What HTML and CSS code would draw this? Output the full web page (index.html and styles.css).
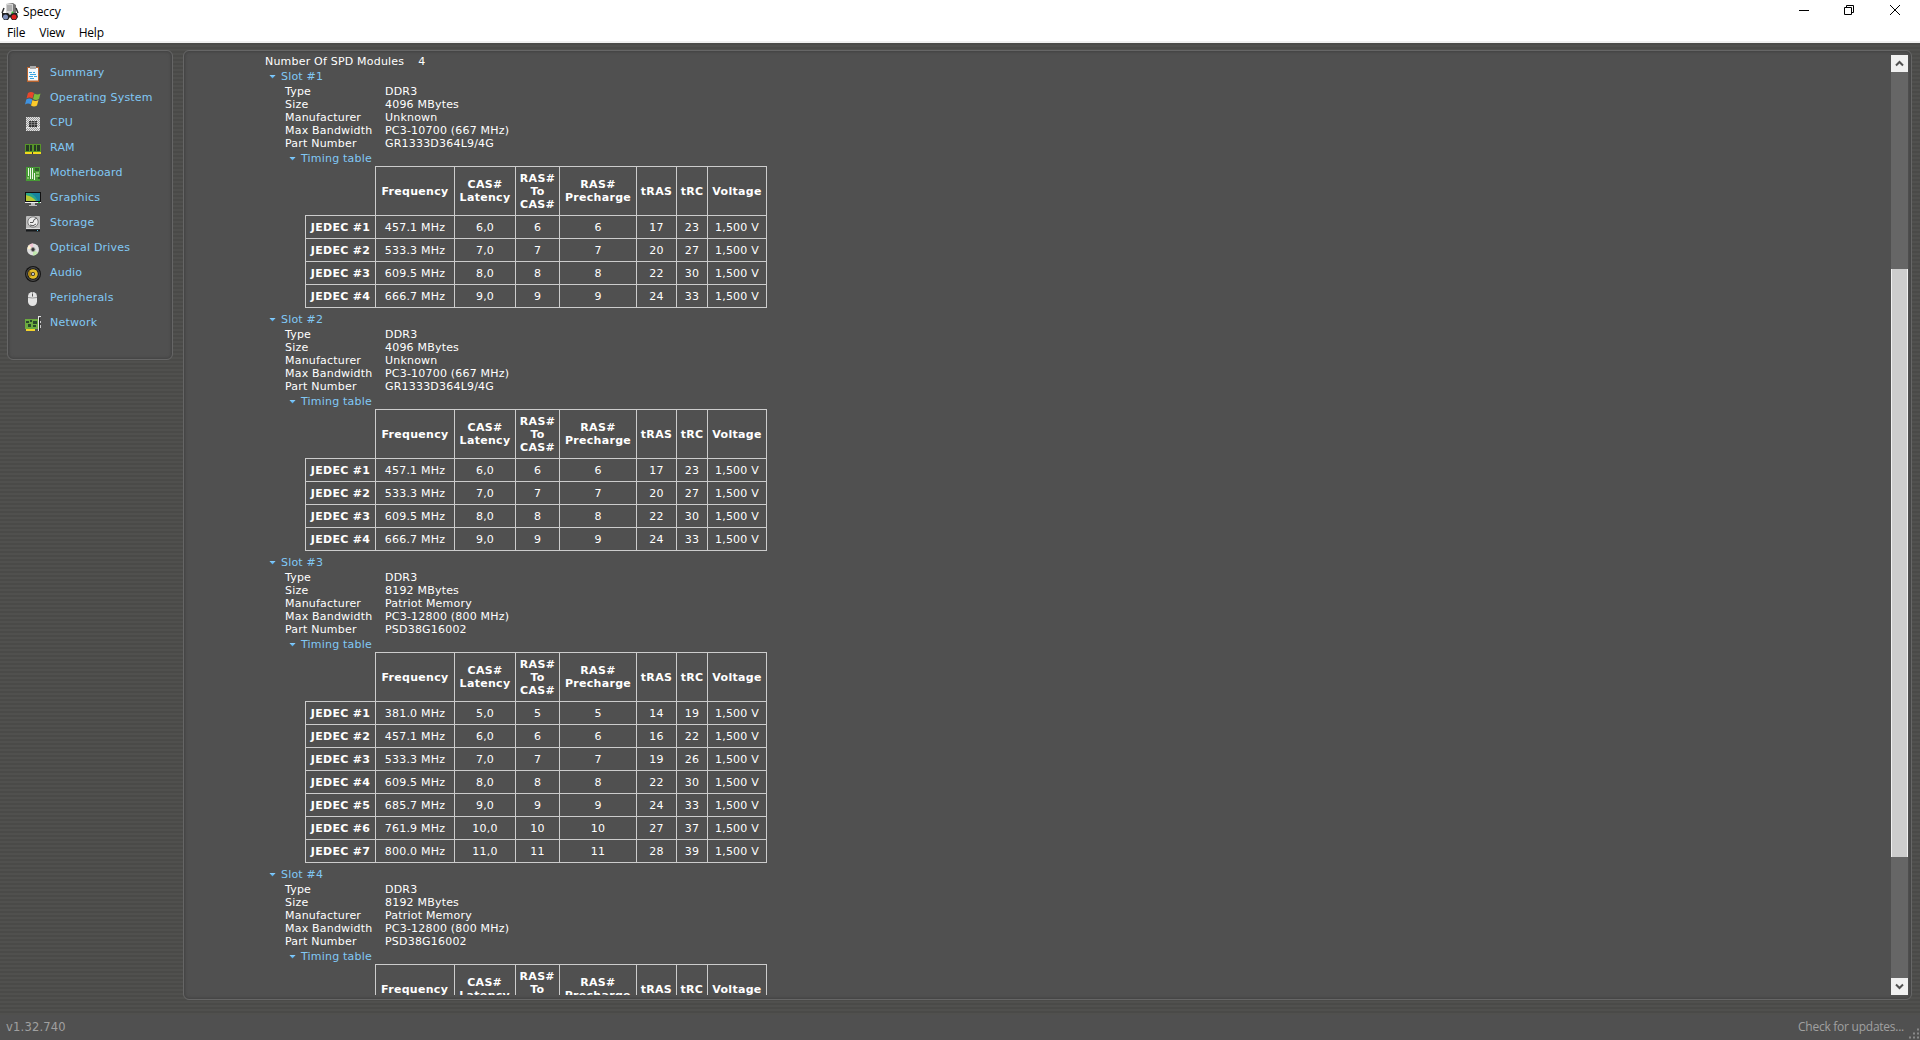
FILE: index.html
```html
<!DOCTYPE html>
<html lang="en">
<head>
    <meta charset="UTF-8">
    <meta name="viewport" content="width=device-width, initial-scale=1.0">
    <title>Speccy</title>
    <link rel="stylesheet" href="styles.css">
</head>
<body>
    <header class="titlebar">
        <svg class="app-icon" width="18" height="18" viewBox="0 0 18 18">
            <path d="M5 1l7-1 3 2v9H5z" fill="#777"/>
            <path d="M5 1h7v10H5z" fill="#d5d5d5"/>
            <path d="M6 3h5M6 5h5M6 7h5" stroke="#888"/>
            <path d="M3 5L1 10M15 5l2 5" stroke="#333" stroke-width="1.5"/>
            <path d="M1 10h6l2 2 2-2h5l1 4-2 3h-4l-2-3-2 3H3l-2-3z" fill="#222"/>
            <circle cx="4.500" cy="14" r="2.500" fill="#7f90bb"/>
            <circle cx="13" cy="14" r="2.500" fill="#e02020"/>
            <circle cx="11.500" cy="9.500" r="1" fill="#3c3"/>
        </svg>
        <span class="app-name">Speccy</span>
        <div class="window-buttons">
            <svg width="10" height="10" viewBox="0 0 10 10"><path d="M0 5.500h10"/></svg>
            <svg width="10" height="10" viewBox="0 0 10 10"><path d="M.5 2.500h7v7h-7zM2.500 2.500v-2h7v7h-2"/></svg>
            <svg width="10" height="10" viewBox="0 0 10 10"><path d="M0 0l10 10M10 0L0 10"/></svg>
        </div>
    </header>
    <nav class="menubar">
        <span>File</span>
        <span>View</span>
        <span>Help</span>
    </nav>

    <main class="workspace">
        <aside class="panel sidebar">
            <a class="item">
                <svg width="16" height="16" viewBox="0 0 16 16">
                    <rect x="2" y="1" width="12" height="15" fill="#b8632e"/>
                    <rect x="3" y="2" width="10" height="12.500" fill="#f4f7fa"/>
                    <rect x="5" y="0" width="6" height="3" fill="#aaa"/>
                    <path d="M4 6.500h3M8 6.500h2M5 8.500h6M4 10.500h4M9 10.500h3M5 12.500h4" stroke="#3ba4e0"/>
                </svg>
                <span>Summary</span>
            </a>
            <a class="item">
                <svg width="16" height="16" viewBox="0 0 16 16">
                    <path d="M3 2q3-2 6 0L7.500 7.500q-3-2-6 0z" fill="#e8472b"/>
                    <path d="M9.500 2.500q3 2 6 0L14 8q-3 2-6 0z" fill="#7fba3a"/>
                    <path d="M1.300 8.500q3-2 6 0L6 13.500q-3-2-6 0z" fill="#3f92e0"/>
                    <path d="M7.500 9q3 2 6 0L12 14.500q-3 2-6 0z" fill="#fbc92b"/>
                </svg>
                <span>Operating System</span>
            </a>
            <a class="item">
                <svg width="16" height="16" viewBox="0 0 16 16">
                    <rect x="1" y="1" width="14" height="14" fill="#999"/>
                    <path d="M1 1.500h14M1 3.500h14M1 12.500h14M1 14.500h14" stroke="#e4e4e4" stroke-dasharray="1 1"/>
                    <path d="M2 2.500h13M2 4.500h13M2 11.500h13M2 13.500h13" stroke="#e4e4e4" stroke-dasharray="1 1"/>
                    <path d="M1.500 5v7M13.500 5v7M3.500 5v7" stroke="#e4e4e4" stroke-dasharray="1 1"/>
                    <path d="M2.500 6v6M12.500 6v6M14.500 6v6" stroke="#e4e4e4" stroke-dasharray="1 1"/>
                    <rect x="4" y="5" width="8" height="6" fill="#333"/>
                    <path d="M4 6.500h8M4 8.500h8M6.500 5v6M9.500 5v6" stroke="#999" stroke-width=".6"/>
                </svg>
                <span>CPU</span>
            </a>
            <a class="item">
                <svg width="16" height="16" viewBox="0 0 16 16">
                    <rect y="3" width="16" height="8" fill="#579529"/>
                    <path d="M1 4h3v6H1zM5 4h2v6H5zM9 4h2v6H9zM12 4h3v6h-3z" fill="#263a25"/>
                    <path d="M0 12h16" stroke="#f3d91c" stroke-width="2"/>
                    <path d="M7.500 11v2" stroke="#333"/>
                </svg>
                <span>RAM</span>
            </a>
            <a class="item">
                <svg width="16" height="16" viewBox="0 0 16 16">
                    <rect x="1" y="1" width="14" height="14" fill="#479b35"/>
                    <path d="M3.500 2v8M5.500 2v11M7.500 2v11M9.500 7v7" stroke="#ecf7e6"/>
                    <path d="M10 2h4v3h-4z" fill="#315c2d"/>
                    <path d="M11 7h3M11 10h3M2 12h2" stroke="#c5df9f"/>
                    <path d="M13 11h2v2h-2z" fill="#305a29"/>
                </svg>
                <span>Motherboard</span>
            </a>
            <a class="item">
                <svg width="16" height="16" viewBox="0 0 16 16">
                    <rect y="1" width="16" height="11" fill="#111"/>
                    <rect x="1" y="2" width="14" height="8" fill="#1884a0"/>
                    <path d="M1 4q7 0 11 6H1z" fill="#b6c934"/>
                    <path d="M1 2h4q5 2 8 8h-2Q7 5 1 4z" fill="#2ba58a"/>
                    <path d="M0 11.500h16" stroke="#eee"/>
                    <path d="M13 11.500h2" stroke="#21df3c"/>
                    <path d="M6 12h4v2h2v1H4v-1h2z" fill="#bbb"/>
                </svg>
                <span>Graphics</span>
            </a>
            <a class="item">
                <svg width="16" height="16" viewBox="0 0 16 16">
                    <rect x="1" width="14" height="13" rx="1" fill="#bcbcbc"/>
                    <circle cx="8" cy="6" r="5.200" fill="#ededed" stroke="#777"/>
                    <path d="M12 2Q8 3 8 6.500H5M5 9q3 2 6-1" stroke="#555" fill="none"/>
                    <path d="M1 12.500h14" stroke="#ddd"/>
                    <path d="M1 14.500h14" stroke="#16191b" stroke-width="2"/>
                    <path d="M12 14.500h1" stroke="#57b9d9"/>
                </svg>
                <span>Storage</span>
            </a>
            <a class="item">
                <svg width="16" height="16" viewBox="0 0 16 16">
                    <circle cx="8" cy="8.500" r="6" fill="#dedede"/>
                    <path d="M8 8.500L4 4q2-2 4-1.500z" fill="#f2c6d4"/>
                    <path d="M8 8.500l5 3q-2 3-5 3z" fill="#c2e8ae"/>
                    <path d="M8 8.500L2.500 8q0-2 1.500-4z" fill="#fff3ce"/>
                    <circle cx="8" cy="8.500" r="2" fill="#333" stroke="#999"/>
                </svg>
                <span>Optical Drives</span>
            </a>
            <a class="item">
                <svg width="16" height="16" viewBox="0 0 16 16">
                    <circle cx="8" cy="8" r="8" fill="#151515"/>
                    <circle cx="8" cy="8" r="6.300" fill="none" stroke="#585858"/>
                    <circle cx="8" cy="8" r="4.800" fill="#e2bd29"/>
                    <path d="M8 8L4 4.500Q2.500 8 5 11z" fill="#a87e14"/>
                    <circle cx="8" cy="8" r="2" fill="#333"/>
                    <circle cx="8" cy="8" r="1" fill="#eee"/>
                </svg>
                <span>Audio</span>
            </a>
            <a class="item">
                <svg width="16" height="16" viewBox="0 0 16 16">
                    <rect x="3" y="1" width="9" height="14" rx="4.500" fill="#e4e4e4"/>
                    <path d="M3 6.500q4.500 1 9 0M7.500 1v5" stroke="#999" fill="none"/>
                    <path d="M7.500 3v2" stroke="#555"/>
                </svg>
                <span>Peripherals</span>
            </a>
            <a class="item">
                <svg width="16" height="16" viewBox="0 0 16 16">
                    <rect y="3" width="13" height="10" fill="#6caa3f"/>
                    <path d="M1 5h3v2H1zM5 4h2v2H5zM8 5h4v3H8zM3 8h3v3H3zM8 9h3v2H8z" fill="#29482b"/>
                    <path d="M1 14h9" stroke="#f2d32b" stroke-width="2"/>
                    <path d="M13 .5h3M13.500 1v14" stroke="#e5e5e5"/>
                    <path d="M14.500 2v13" stroke="#222"/>
                    <path d="M15.500 5v2M15.500 9v3" stroke="#ccc"/>
                </svg>
                <span>Network</span>
            </a>
        </aside>

        <section class="panel content">
            <div class="report">
                <div class="modules"><span>Number Of SPD Modules</span><span>4</span></div>
                <div id="slots"></div>
            </div>
            <div class="scrollbar">
                <div class="scroll-btn"><svg width="9" height="7" viewBox="0 0 9 7"><path d="M1 5.500L4.500 2 8 5.500"/></svg></div>
                <div class="thumb"></div>
                <div class="scroll-btn"><svg width="9" height="7" viewBox="0 0 9 7"><path d="M1 1.500L4.500 5 8 1.500"/></svg></div>
            </div>
        </section>
    </main>

    <footer class="statusbar">
        <span class="version">v1.32.740</span>
        <span class="updates">Check for updates...</span>
        <svg class="grip" width="12" height="12" viewBox="0 0 12 12"><path d="M9 1.500h2M5 5.500h2M9 5.500h2M1 9.500h2M5 9.500h2M9 9.500h2"/></svg>
    </footer>

    <script src="script.js"></script>
</body>
</html>
```
FILE: styles.css
```css
* {
    box-sizing: border-box;
    margin: 0;
    padding: 0;
}
body {
    height: 100vh;
    display: flex;
    flex-direction: column;
    overflow: hidden;
    background: #505050;
    color: white;
    font-family: Verdana, 'DejaVu Sans', sans-serif;
    font-size: 11px;
    letter-spacing: 0.2px;
}

/* Window chrome */
.titlebar {
    display: flex;
    align-items: center;
    height: 23px;
    padding: 0 20px 0 1px;
    background: white;
    color: black;
    font: 12px 'Open Sans', sans-serif;
    letter-spacing: -0.1px;
}
.app-icon {
    margin-right: 4px;
}
.window-buttons {
    display: flex;
    gap: 36px;
    margin: -3px 0 0 auto;
}
.window-buttons svg {
    fill: none;
    stroke: black;
}
.window-buttons svg:first-child {
    margin-right: -1px;
}
.menubar {
    display: flex;
    gap: 14px;
    height: 20px;
    padding-left: 7px;
    background: white;
    border-bottom: 2px solid #f0f0f0;
    color: black;
    font: 12px/20px 'Open Sans', sans-serif;
    letter-spacing: -0.2px;
}

/* Striped background behind the panels */
.workspace {
    flex: 1;
    min-height: 0;
    display: flex;
    align-items: flex-start;
    gap: 10px;
    padding: 7px 8px 15px 7px;
    background: repeating-linear-gradient(#4a4a48 0 2px, #50504e 2px 4px);
}
.panel {
    background: #505050;
    border: 1px solid #666;
    border-radius: 6px;
    box-shadow: inset 0 0 3px 1px #414141;
}
.sidebar {
    width: 166px;
    height: 310px;
    padding: 9px 0 0 17px;
}
.item {
    display: flex;
    align-items: center;
    gap: 9px;
    height: 25px;
    color: #81c8f5;
}
.item svg {
    margin-top: 2px;
}
.content {
    flex: 1;
    align-self: stretch;
    display: flex;
    padding: 4px 3px 4px 81px;
}
.report {
    flex: 1;
    overflow: hidden;
}

/* Report tree */
.modules {
    display: flex;
    gap: 14px;
    height: 12px;
    line-height: 13px;
}
.slot {
    margin-bottom: 2px;
}
.slot-title, .timing-title {
    display: flex;
    align-items: center;
    gap: 6px;
    color: #81c8f5;
}
.slot-title {
    height: 18px;
    padding-left: 4px;
}
.timing-title {
    height: 16px;
    padding-left: 24px;
}
.arrow {
    width: 7px;
    height: 4px;
    margin: 1px -1px 0 0;
    background: linear-gradient(#8fd3ff, #3494dd);
    clip-path: polygon(0 0, 100% 0, 50% 100%);
}
.props {
    display: grid;
    grid-template-columns: 100px auto;
    grid-auto-rows: 13px;
    line-height: 13px;
    padding-left: 20px;
}
.timings {
    width: 462px;
    margin-left: 40px;
    border-collapse: collapse;
    table-layout: fixed;
    text-align: center;
    line-height: 13px;
}
.timings tr {
    height: 23px;
}
.timings .head {
    height: 49px;
}
.timings th, .timings td {
    border: 1px solid #ccc;
    white-space: nowrap;
}
.timings th {
    letter-spacing: 0.3px;
}
.timings .corner {
    border: none;
}
.c-name { width: 70px; }
.c-freq { width: 79px; }
.c-cas { width: 61px; }
.c-rcd { width: 44px; }
.c-pre { width: 77px; }
.c-ras { width: 40px; }
.c-rc { width: 31px; }
.c-volt { width: 59px; }

/* Scrollbar */
.scrollbar {
    display: flex;
    flex-direction: column;
    width: 17px;
    background: #666;
}
.scroll-btn {
    display: flex;
    align-items: center;
    justify-content: center;
    height: 17px;
    background: #f0f0f0;
}
.scroll-btn svg {
    fill: none;
    stroke: #505050;
    stroke-width: 2;
}
.thumb {
    height: 588px;
    margin: 197px 0 auto;
    background: #cdcdcd;
    border: solid #f0f0f0;
    border-width: 0 1px;
}

.statusbar {
    display: flex;
    align-items: center;
    height: 25px;
    padding-left: 6px;
    color: #a0a0a0;
}
.version {
    margin-top: -2px;
    font-size: 11.5px;
}
.updates {
    margin: -2px 0 0 auto;
    font: 12px 'Open Sans', sans-serif;
    letter-spacing: -0.25px;
}
.grip {
    align-self: flex-end;
    margin-left: 4px;
    stroke: #888;
    stroke-width: 2;
}
```
FILE: script.js
```js
const jedec = [
    ['457.1', 6, 17, 23],
    ['533.3', 7, 20, 27],
    ['609.5', 8, 22, 30],
    ['666.7', 9, 24, 33]
];
const jedecPatriot = [
    ['381.0', 5, 14, 19],
    ['457.1', 6, 16, 22],
    ['533.3', 7, 19, 26],
    ['609.5', 8, 22, 30],
    ['685.7', 9, 24, 33],
    ['761.9', 10, 27, 37],
    ['800.0', 11, 28, 39]
];
const unknown = { size: '4096', maker: 'Unknown', band: 'PC3-10700 (667 MHz)', part: 'GR1333D364L9/4G', rows: jedec };
const patriot = { size: '8192', maker: 'Patriot Memory', band: 'PC3-12800 (800 MHz)', part: 'PSD38G16002', rows: jedecPatriot };
// the last slot runs past the bottom of the view, only its header row shows
const slots = [unknown, unknown, patriot, { ...patriot, rows: [] }];

function timingRow(row, i) {
    const [freq, cl, ras, rc] = row;
    return `<tr><th>JEDEC #${i + 1}</th><td>${freq} MHz</td><td>${cl},0</td><td>${cl}</td><td>${cl}</td><td>${ras}</td><td>${rc}</td><td>1,500 V</td></tr>`;
}

document.getElementById('slots').innerHTML = slots.map((s, i) => `
    <div class="slot">
        <div class="slot-title"><i class="arrow"></i>Slot #${i + 1}</div>
        <div class="props">
            <span>Type</span><span>DDR3</span>
            <span>Size</span><span>${s.size} MBytes</span>
            <span>Manufacturer</span><span>${s.maker}</span>
            <span>Max Bandwidth</span><span>${s.band}</span>
            <span>Part Number</span><span>${s.part}</span>
        </div>
        <div class="timing-title"><i class="arrow"></i>Timing table</div>
        <table class="timings">
            <colgroup>
                <col class="c-name"><col class="c-freq"><col class="c-cas"><col class="c-rcd">
                <col class="c-pre"><col class="c-ras"><col class="c-rc"><col class="c-volt">
            </colgroup>
            <tr class="head">
                <th class="corner"></th><th>Frequency</th><th>CAS#<br>Latency</th><th>RAS#<br>To<br>CAS#</th>
                <th>RAS#<br>Precharge</th><th>tRAS</th><th>tRC</th><th>Voltage</th>
            </tr>
            ${s.rows.map(timingRow).join('')}
        </table>
    </div>`).join('');
```
